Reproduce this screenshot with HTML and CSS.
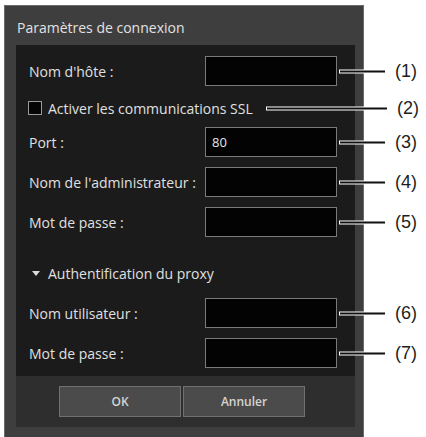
FILE: index.html
```html
<!DOCTYPE html>
<html>
<head>
    <title>Paramètres de connexion</title>
    <link rel="stylesheet" href="styles.css">
</head>
<body>
    <div class="page">
        <div class="dialog">
            <div class="dialog-title">Paramètres de connexion</div>
            <div class="panel">
                <div class="row first">
                    <label>Nom d'hôte :</label>
                    <div class="field"><input type="text"><span class="callout"><i></i><b>(1)</b></span></div>
                </div>
                <div class="row check">
                    <span class="box"></span>
                    <span class="check-text">Activer les communications SSL</span>
                    <span class="callout ssl"><i></i><b>(2)</b></span>
                </div>
                <div class="row">
                    <label>Port :</label>
                    <div class="field"><input type="text" value="80"><span class="callout"><i></i><b>(3)</b></span></div>
                </div>
                <div class="row">
                    <label>Nom de l'administrateur :</label>
                    <div class="field"><input type="text"><span class="callout"><i></i><b>(4)</b></span></div>
                </div>
                <div class="row">
                    <label>Mot de passe :</label>
                    <div class="field"><input type="password"><span class="callout"><i></i><b>(5)</b></span></div>
                </div>
                <div class="row section">
                    <span class="arrow"></span>
                    <span>Authentification du proxy</span>
                </div>
                <div class="row proxy">
                    <label>Nom utilisateur :</label>
                    <div class="field"><input type="text"><span class="callout"><i></i><b>(6)</b></span></div>
                </div>
                <div class="row">
                    <label>Mot de passe :</label>
                    <div class="field"><input type="password"><span class="callout"><i></i><b>(7)</b></span></div>
                </div>
            </div>
            <div class="footer">
                <button>OK</button>
                <button>Annuler</button>
            </div>
        </div>
    </div>
</body>
</html>
```

FILE: styles.css
```css
body {
    margin: 0;
    background: #ffffff;
    font-family: 'Open Sans', 'DejaVu Sans', sans-serif;
    overflow: hidden;
}
.page {
    padding: 5px 0 0 4px;
}
.dialog {
    width: 339px;
    height: 440px;
    padding: 0 8px 0 11px;
    background: #3e3e3e;
    border: 1px solid #6a6a6a;
    border-bottom: none;
}
.dialog-title {
    height: 39px;
    line-height: 44px;
    padding-left: 1px;
    color: #e2e2e2;
    font-size: 14px;
}
.panel {
    background: #1b1b1b;
    padding: 11px 0 8px 13px;
}
.row {
    display: flex;
    align-items: center;
    margin-top: 10px;
    color: #e0e0e0;
    font-size: 14px;
}
.row.first {
    margin-top: 0;
}
.row label {
    width: 176px;
    white-space: nowrap;
}
.field {
    position: relative;
    display: flex;
    align-items: center;
}
.field input {
    width: 132px;
    height: 30px;
    box-sizing: border-box;
    margin: 0;
    padding: 0 6px;
    background: #030303;
    border: 1px solid #7a7a7a;
    color: #e6e6e6;
    font-family: inherit;
    font-size: 13px;
    outline: none;
}
.row.check {
    position: relative;
    height: 16px;
    margin-top: 14px;
    margin-bottom: 11px;
    margin-left: -1px;
}
.box {
    width: 12px;
    height: 12px;
    border: 1px solid #9a9a9a;
    background: #050505;
    margin-right: 6px;
}
.row.section {
    height: 16px;
    margin-top: 28px;
    margin-left: 3px;
}
.arrow {
    width: 0;
    height: 0;
    border-left: 4px solid transparent;
    border-right: 4px solid transparent;
    border-top: 5px solid #dcdcdc;
    margin-right: 8px;
}
.row.proxy {
    margin-top: 17px;
}
.callout {
    position: absolute;
    left: 100%;
    top: 50%;
    display: flex;
    align-items: center;
    transform: translateY(-50%);
}
.callout i {
    display: block;
    width: 45px;
    height: 2px;
    margin-left: 3px;
    background: #111111;
    box-shadow: 0 0 0 1px #ffffff;
}
.callout b {
    margin-left: 10px;
    font-family: 'Liberation Sans', Arial, sans-serif;
    font-weight: normal;
    font-size: 18px;
    color: #1e1e1e;
}
.callout.ssl {
    left: 236px;
}
.callout.ssl i {
    width: 120px;
}
.footer {
    height: 51px;
    background: #2e2e2e;
    padding: 10px 0 0 43px;
    box-sizing: border-box;
    display: flex;
    gap: 2px;
}
.footer button {
    width: 122px;
    height: 31px;
    background: #4b4b4b;
    border: 1px solid #707070;
    color: #d4d4d4;
    font-family: inherit;
    font-size: 12px;
    font-weight: 600;
}
```
